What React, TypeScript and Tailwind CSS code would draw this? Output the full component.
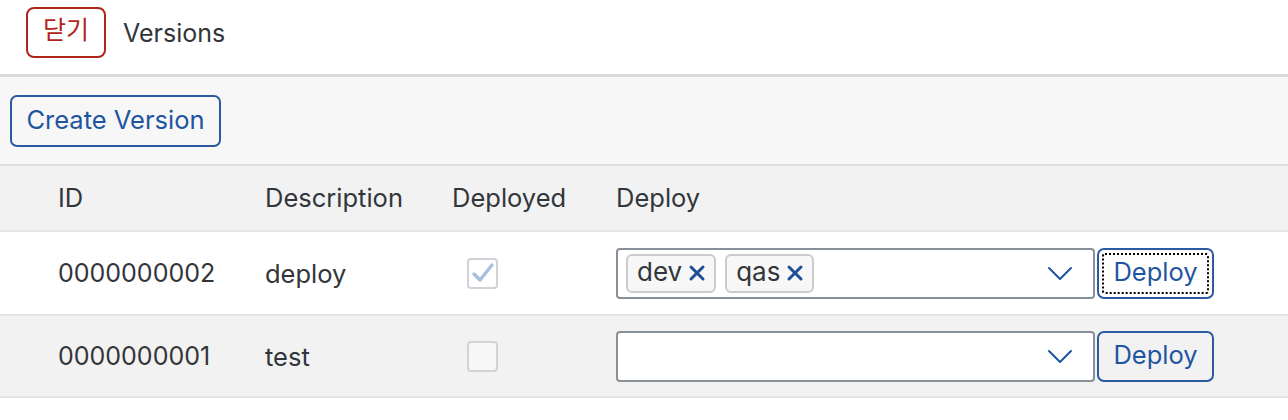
import { X } from "lucide-react";

const font = "font-['Inter','Noto_Sans_CJK_KR',sans-serif]";

type Row = { id: string; desc: string; deployed: boolean; tags: string[]; focused?: boolean; bg: string };

const rows: Row[] = [
  { id: "0000000002", desc: "deploy", deployed: true, tags: ["dev", "qas"], focused: true, bg: "bg-white" },
  { id: "0000000001", desc: "test", deployed: false, tags: [], bg: "bg-[#f2f2f2]" },
];

function Token({ label }: { label: string }) {
  return (
    <span className="flex items-center gap-[3px] h-[39px] pl-[9px] pr-[5px] rounded-[6px] border-2 border-[#c9cbcd] bg-[#f7f7f7]">
      <span className="text-[26px] text-[#32363a] leading-none pb-[3px]">{label}</span>
      <X className="w-[24px] h-[24px] text-[#1f4f98]" strokeWidth={3} />
    </span>
  );
}

function Chevron() {
  return (
    <svg className="ml-auto" width="26" height="15" viewBox="0 0 26 15" fill="none">
      <polyline points="2,2 13,13 24,2" stroke="#1f55a0" strokeWidth="2" strokeLinecap="round" strokeLinejoin="round" />
    </svg>
  );
}

function Tick() {
  return (
    <svg width="24" height="22" viewBox="0 0 24 22" fill="none">
      <polyline points="3,12 9,18 21,3" stroke="#a9bfdf" strokeWidth="3.4" strokeLinecap="round" strokeLinejoin="round" />
    </svg>
  );
}

export default function App() {
  return (
    <div className={`${font} w-[1288px] h-[420px] bg-white text-[#32363a]`}>
      {/* header */}
      <div className="h-[74px] flex items-start pt-[7px] pl-[26px] gap-[17px]">
        <button className="w-[80px] h-[51px] rounded-[8px] border-2 border-[#b0251b] text-[#b0251b] text-[25px] flex items-center justify-center pb-[3px]">
          닫기
        </button>
        <span className="text-[25px] mt-[8px]">Versions</span>
      </div>
      <div className="h-[3px] bg-[#d9d9d9]" />

      {/* toolbar */}
      <div className="h-[89px] bg-[#f7f7f7] pl-[10px] pt-[18px] border-b-2 border-[#dedede]">
        <button className="w-[211px] h-[52px] rounded-[7px] border-2 border-[#2b5aa3] text-[#1f55a0] text-[25.5px] pb-[1px]">
          Create Version
        </button>
      </div>

      {/* table header */}
      <div className="h-[66px] bg-[#f2f2f2] border-b-2 border-[#e5e5e5] grid grid-cols-[207px_187px_164px_1fr] items-center pl-[58px] text-[25.5px]">
        <span>ID</span>
        <span>Description</span>
        <span>Deployed</span>
        <span>Deploy</span>
      </div>

      {rows.map((r, i) => (
        <div
          key={r.id}
          className={`${r.bg} ${i === 0 ? "h-[84px]" : "h-[82px]"} border-b-2 border-[#e3e3e3] grid grid-cols-[207px_187px_164px_1fr] items-center pl-[58px] text-[25.5px]`}
        >
          <span className="text-[25px] pt-[2px]">{r.id}</span>
          <span className="pt-[2px]">{r.desc}</span>
          <span className="pl-[15px]">
            <span
              className={`w-[31px] h-[31px] rounded-[4px] border-2 border-[#d0d3d7] flex items-center justify-center ${
                r.deployed ? "bg-white" : "bg-[#f7f7f7]"
              }`}
            >
              {r.deployed && <Tick />}
            </span>
          </span>
          <div className="flex items-center">
            <div className="w-[479px] h-[51px] rounded-[4px] border-2 border-[#899097] bg-white flex items-center pl-[8px] pr-[20px] gap-[9px]">
              {r.tags.map((t) => (
                <Token key={t} label={t} />
              ))}
              <Chevron />
            </div>
            <button className="ml-[2px] w-[117px] h-[51px] rounded-[7px] border-2 border-[#2b5aa3] text-[#1f55a0] text-[25.5px] p-[3px]">
              <span
                className={`w-full h-full flex items-center justify-center pb-[1px] rounded-[3px] ${
                  r.focused ? "border-2 border-dotted border-black" : ""
                }`}
              >
                Deploy
              </span>
            </button>
          </div>
        </div>
      ))}
    </div>
  );
}
